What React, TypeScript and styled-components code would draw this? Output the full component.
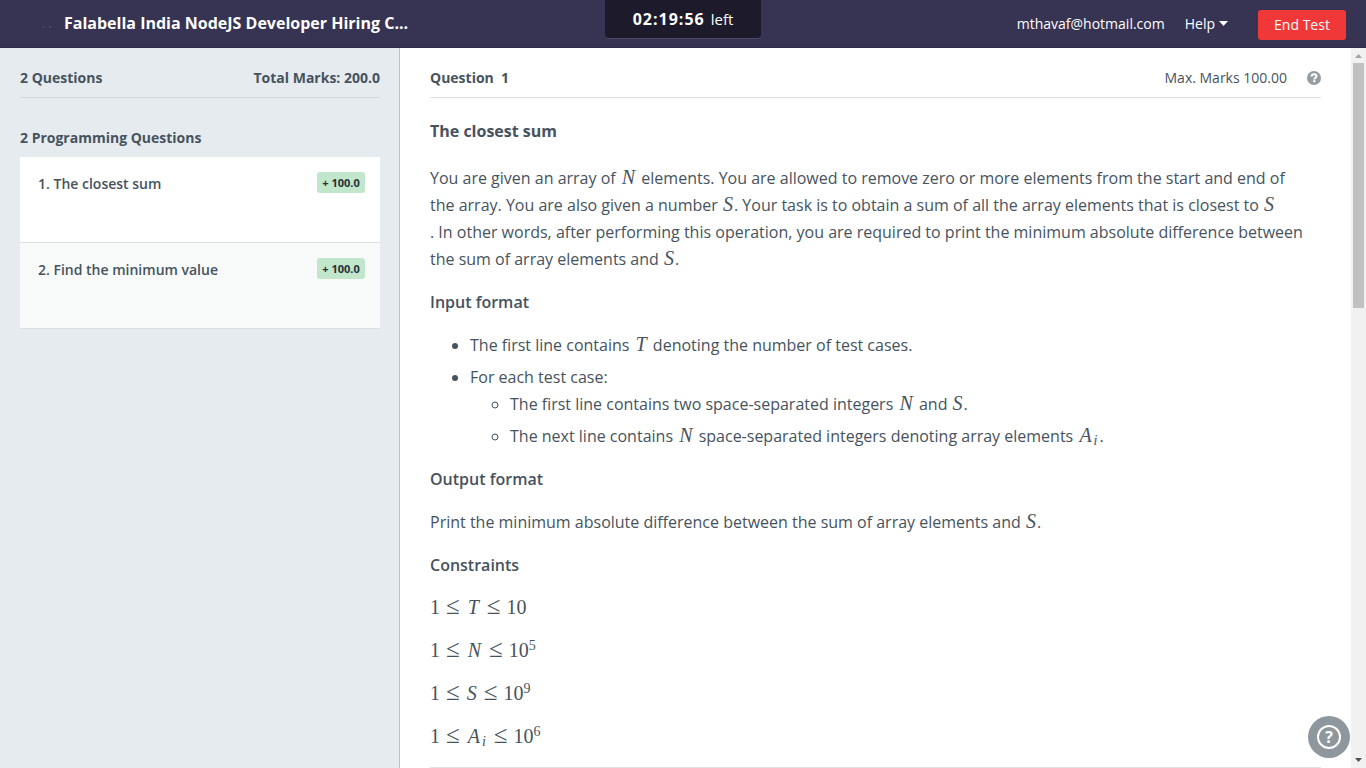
import React from "react";
import styled, { createGlobalStyle } from "styled-components";

const Global = createGlobalStyle`
  *, *::before, *::after { box-sizing: border-box; }
  body {
    margin: 0;
    font-family: "Open Sans", "Noto Sans", sans-serif;
    font-size: 14px;
    color: #46535e;
    background: #fff;
  }
  h1, h2, h3, p, ul, ol { margin: 0; padding: 0; }
`;

const Page = styled.div`
  display: flex;
  flex-direction: column;
  height: 100vh;
`;

const TopBar = styled.header`
  display: grid;
  grid-template-columns: 1fr auto 1fr;
  flex: 0 0 48px;
  background: #363353;
  border-bottom: 1px solid #2c2a48;
  color: #fff;
`;

const Brand = styled.div`
  display: flex;
  align-items: center;
  gap: 12px;
  padding: 0 0 2px 20px;
  min-width: 0;
`;

const TestTitle = styled.h1`
  font-size: 16px;
  font-weight: 700;
  line-height: 24px;
  white-space: nowrap;
`;

const Timer = styled.div`
  height: 39px;
  width: 156px;
  line-height: 38px;
  text-align: center;
  font-size: 15px;
  background: #1d1b2b;
  border-bottom: 1px solid #4b4866;
  border-radius: 0 0 4px 4px;
`;

const Digits = styled.strong`
  margin-right: 6px;
  font-size: 16px;
  font-weight: 700;
  letter-spacing: 1px;
`;

const Account = styled.div`
  display: flex;
  align-items: center;
  justify-content: flex-end;
  gap: 20px;
  padding-right: 20px;
`;

const HelpMenu = styled.button`
  display: flex;
  align-items: center;
  gap: 4px;
  margin-right: 10px;
  padding: 0;
  border: 0;
  background: none;
  color: #fff;
  font: inherit;
`;

const EndButton = styled.button`
  width: 88px;
  height: 30px;
  margin-top: 2px;
  padding: 0;
  border: 0;
  border-radius: 3px;
  background: #f03838;
  color: #fff;
  font: inherit;
`;

const Body = styled.div`
  display: flex;
  flex: 1;
  min-height: 0;
`;

const Sidebar = styled.aside`
  flex: 0 0 400px;
  padding: 0 19px 0 20px;
  background: #e6ebef;
  border-right: 1px solid #bcc2c8;
`;

const HeadRow = styled.div<{ $line: string }>`
  display: flex;
  align-items: center;
  height: 50px;
  padding-top: 10px;
  border-bottom: 1px solid ${(p) => p.$line};
  line-height: 20px;
`;

const HeadText = styled.h2`
  margin-right: auto;
  font-size: 14px;
  font-weight: 700;
`;

const Total = styled.strong`
  font-weight: 700;
`;

const GroupTitle = styled.h3`
  margin: 30px 0 9px;
  font-size: 14px;
  font-weight: 700;
  line-height: 20px;
`;

const QuestionList = styled.ol`
  list-style: none;
`;

const QuestionItem = styled.li<{ $active?: boolean }>`
  display: flex;
  align-items: flex-start;
  justify-content: space-between;
  height: 86px;
  padding: 15px 15px 0 18px;
  background: ${(p) => (p.$active ? "#fff" : "#f8faf9")};
  border-bottom: 1px solid #dadfe2;
`;

const QuestionLink = styled.a`
  color: inherit;
  font-weight: 600;
  line-height: 24px;
  text-decoration: none;
`;

const Score = styled.span`
  width: 48px;
  border-radius: 3px;
  background: #c1e6cb;
  color: #263238;
  font-size: 11px;
  font-weight: 700;
  line-height: 21px;
  text-align: center;
`;

const Main = styled.main`
  flex: 1;
  min-width: 0;
  padding: 0 30px;
  overflow: hidden;
`;

const Marks = styled.span`
  margin-right: 20px;
`;

const IconButton = styled.button`
  display: flex;
  padding: 0;
  border: 0;
  background: none;
`;

const Statement = styled.article`
  padding-top: 20px;
  font-size: 16px;
  line-height: 27px;
`;

const Heading = styled.h3`
  margin-bottom: 16px;
  font-size: 16px;
  font-weight: 600;
`;

const ProblemTitle = styled.h2`
  margin-bottom: 20px;
  font-size: 16px;
  font-weight: 700;
`;

const Para = styled.p`
  margin-bottom: 16px;
`;

const Bullets = styled.ul`
  margin-bottom: 16px;
  padding-left: 40px;
`;

const SubBullets = styled.ul`
  padding-left: 40px;
`;

const Bullet = styled.li`
  & + & { margin-top: 5px; }
`;

const MathText = styled.span`
  font-family: "Liberation Serif", serif;
  font-size: 20px;
  line-height: 20px;
`;

const Symbol = styled.i<{ $pad: number }>`
  padding: 0 ${(p) => p.$pad}px;
`;

const Sup = styled.sup`
  font-size: 14px;
  line-height: 0;
  vertical-align: 7px;
`;

const Sub = styled.sub`
  padding-right: 2px;
  font-size: 14px;
  line-height: 0;
  font-style: italic;
  vertical-align: -3px;
`;

const Relation = styled.span`
  padding: 0 6px;
  font-size: 25px;
`;

const Divider = styled.hr`
  height: 1px;
  margin: 0;
  border: 0;
  background: #dfe1e3;
`;

const ScrollTrack = styled.div`
  display: flex;
  flex: 0 0 15px;
  flex-direction: column;
  align-items: center;
  background: #f1f1f1;
`;

const ScrollArrow = styled.svg`
  flex: 0 0 15px;
  width: 15px;
`;

const ScrollThumb = styled.div`
  height: 245px;
  width: 11px;
  margin-bottom: auto;
  background: #c1c1c1;
`;

const HelpBubble = styled.button`
  position: fixed;
  right: 16px;
  bottom: 10px;
  display: grid;
  place-items: center;
  width: 42px;
  height: 42px;
  padding: 0;
  border: 0;
  border-radius: 50%;
  background: #8e979e;
  color: #fff;
`;

const BubbleRing = styled.span`
  width: 24px;
  height: 24px;
  border: 2px solid #fff;
  border-radius: 50%;
  font-family: "Open Sans", sans-serif;
  font-size: 16px;
  font-weight: 700;
  line-height: 20px;
`;

const symbolPadding = { N: 2, S: 1, T: 2, A: 2 };

const M = ({ v, sub }: { v: keyof typeof symbolPadding; sub?: string }) => (
  <MathText>
    <Symbol $pad={symbolPadding[v]}>{v}</Symbol>
    {sub && <Sub>{sub}</Sub>}
  </MathText>
);

const Constraint = ({ v, sub, exp }: { v: keyof typeof symbolPadding; sub?: string; exp?: string }) => (
  <Para>
    <MathText>
      1<Relation>≤</Relation>
      <M v={v} sub={sub} />
      <Relation>≤</Relation>10
      {exp && <Sup>{exp}</Sup>}
    </MathText>
  </Para>
);

export default function App() {
  return (
    <>
      <Global />
      <Page>
        <TopBar>
          <Brand>
            <svg width="32" height="20" viewBox="0 0 32 20" aria-hidden="true">
              <path d="M2 12h18" stroke="#3b3857" strokeDasharray="2 1" />
              <path d="M22 14h2" stroke="#5c5578" />
              <path d="M25 14h1" stroke="#7c3a55" />
              <path d="M30 13v2" stroke="#3f7a52" />
            </svg>
            <TestTitle>Falabella India NodeJS Developer Hiring C...</TestTitle>
          </Brand>
          <Timer>
            <Digits>02:19:56</Digits>left
          </Timer>
          <Account>
            <span>mthavaf@hotmail.com</span>
            <HelpMenu type="button">
              Help
              <svg width="9" height="5" viewBox="0 0 9 5" aria-hidden="true">
                <path d="M0 0h9L4.500 5z" fill="#fff" />
              </svg>
            </HelpMenu>
            <EndButton type="button">End Test</EndButton>
          </Account>
        </TopBar>
        <Body>
          <Sidebar>
            <HeadRow $line="#d3d8dc">
              <HeadText>2 Questions</HeadText>
              <Total>Total Marks: 200.0</Total>
            </HeadRow>
            <GroupTitle>2 Programming Questions</GroupTitle>
            <QuestionList>
              <QuestionItem $active>
                <QuestionLink href="#q1">1. The closest sum</QuestionLink>
                <Score>+ 100.0</Score>
              </QuestionItem>
              <QuestionItem>
                <QuestionLink href="#q2">2. Find the minimum value</QuestionLink>
                <Score>+ 100.0</Score>
              </QuestionItem>
            </QuestionList>
          </Sidebar>
          <Main>
            <HeadRow $line="#dfe1e3">
              <HeadText>Question&nbsp; 1</HeadText>
              <Marks>Max. Marks 100.00</Marks>
              <IconButton type="button" aria-label="About marks">
                <svg width="14" height="14" viewBox="0 0 14 14">
                  <circle cx="7" cy="7" r="7" fill="#959da3" />
                  <path d="M4.500 5.500C4.600 4 5.600 3.300 7 3.300c1.500 0 2.500.8 2.500 2C9.500 6.700 7.300 6.800 7.300 8.400" fill="none" stroke="#fff" strokeWidth="2" />
                  <path d="M6.200 9.200h2.200v2h-2.200z" fill="#fff" />
                </svg>
              </IconButton>
            </HeadRow>
            <Statement>
              <ProblemTitle>The closest sum</ProblemTitle>
              <Para>
                You are given an array of <M v="N" /> elements. You are allowed to remove zero or more elements from
                the start and end of
                <br />
                the array. You are also given a number <M v="S" />. Your task is to obtain a sum of all the array
                elements that is closest to <M v="S" />
                <br />. In other words, after performing this operation, you are required to print the minimum
                absolute difference between
                <br />
                the sum of array elements and <M v="S" />.
              </Para>
              <Heading>Input format</Heading>
              <Bullets>
                <Bullet>
                  The first line contains <M v="T" /> denoting the number of test cases.
                </Bullet>
                <Bullet>
                  For each test case:
                  <SubBullets>
                    <Bullet>
                      The first line contains two space-separated integers <M v="N" /> and <M v="S" />.
                    </Bullet>
                    <Bullet>
                      The next line contains <M v="N" /> space-separated integers denoting array elements{" "}
                      <M v="A" sub="i" />.
                    </Bullet>
                  </SubBullets>
                </Bullet>
              </Bullets>
              <Heading>Output format</Heading>
              <Para>
                Print the minimum absolute difference between the sum of array elements and <M v="S" />.
              </Para>
              <Heading>Constraints</Heading>
              <Constraint v="T" />
              <Constraint v="N" exp="5" />
              <Constraint v="S" exp="9" />
              <Constraint v="A" sub="i" exp="6" />
              <Divider />
            </Statement>
          </Main>
          <ScrollTrack aria-hidden="true">
            <ScrollArrow height="15" viewBox="0 0 15 15">
              <path d="M4 10h7L7.500 6z" fill="#a3a3a3" />
            </ScrollArrow>
            <ScrollThumb />
            <ScrollArrow height="15" viewBox="0 0 15 15">
              <path d="M4 5h7L7.500 9z" fill="#505050" />
            </ScrollArrow>
          </ScrollTrack>
        </Body>
        <HelpBubble type="button" aria-label="Help">
          <BubbleRing>?</BubbleRing>
        </HelpBubble>
      </Page>
    </>
  );
}
